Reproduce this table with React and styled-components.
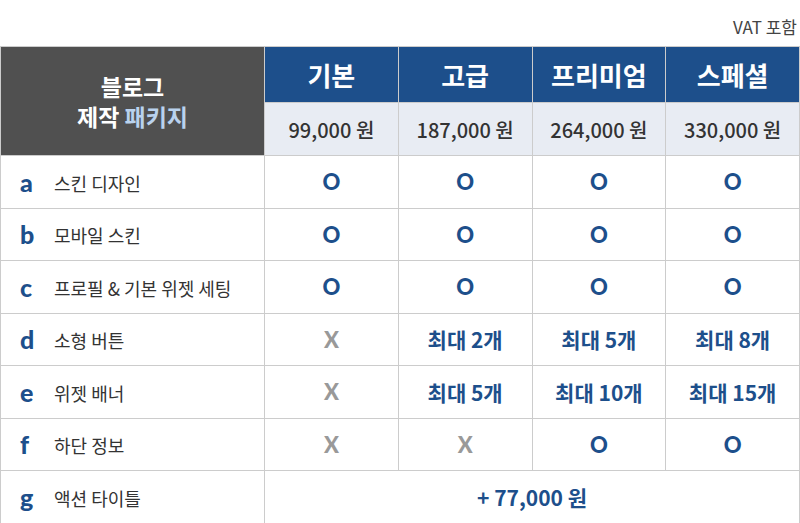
import * as React from "react";
import styled, { createGlobalStyle } from "styled-components";

const COLOR = {
  blue: "#1d4f8b",
  dark: "#505050",
  line: "#cccccc",
  price: "#e8ecf3",
  text: "#333333",
  gray: "#999999",
  accent: "#b9d2ee",
};

const PLANS = ["기본", "고급", "프리미엄", "스페셜"];
const PRICES = ["99,000 원", "187,000 원", "264,000 원", "330,000 원"];

const ROWS = [
  { key: "a", label: "스킨 디자인", cells: ["O", "O", "O", "O"] },
  { key: "b", label: "모바일 스킨", cells: ["O", "O", "O", "O"] },
  { key: "c", label: "프로필 & 기본 위젯 세팅", cells: ["O", "O", "O", "O"] },
  { key: "d", label: "소형 버튼", cells: ["X", "최대 2개", "최대 5개", "최대 8개"] },
  { key: "e", label: "위젯 배너", cells: ["X", "최대 5개", "최대 10개", "최대 15개"] },
  { key: "f", label: "하단 정보", cells: ["X", "X", "O", "O"] },
];

const GlobalStyle = createGlobalStyle`
  html, body {
    margin: 0;
    padding: 0;
    background: #fff;
  }
  body {
    font-family: "Noto Sans CJK KR", "Noto Sans", sans-serif;
  }
`;

const App = () => {
  return (
    <Page>
      <GlobalStyle />
      <Note>VAT 포함</Note>
      <Table>
        <colgroup>
          <col style={{ width: 264 }} />
          <col />
          <col />
          <col />
          <col />
        </colgroup>
        <thead>
          <tr>
            <Title rowSpan={2}>
              블로그
              <br />
              제작 <Accent>패키지</Accent>
            </Title>
            {PLANS.map((p) => (
              <Plan key={p}>{p}</Plan>
            ))}
          </tr>
          <tr>
            {PRICES.map((p) => (
              <Price key={p}>{p}</Price>
            ))}
          </tr>
        </thead>
        <tbody>
          {ROWS.map((row) => (
            <Row key={row.key}>
              <Label>
                <Letter>{row.key}</Letter>
                {row.label}
              </Label>
              {row.cells.map((c, i) => (
                <Cell key={i} $mark={c === "O" || c === "X"} $off={c === "X"}>
                  {c}
                </Cell>
              ))}
            </Row>
          ))}
          <Row>
            <Label>
              <Letter>g</Letter>
              액션 타이틀
            </Label>
            <Cell colSpan={4}>+ 77,000 원</Cell>
          </Row>
        </tbody>
      </Table>
    </Page>
  );
};

const Page = styled.div`
  width: 800px;
  display: flex;
  flex-direction: column;
`;

const Note = styled.div`
  height: 46px;
  display: flex;
  align-items: center;
  justify-content: flex-end;
  padding: 6px 3px 0 0;
  box-sizing: border-box;
  font-size: 17px;
  color: #444;
`;

const Table = styled.table`
  width: 800px;
  border-collapse: collapse;
  table-layout: fixed;

  td,
  th {
    border: 1px solid ${COLOR.line};
    padding: 0;
    text-align: center;
  }
`;

const Title = styled.th`
  background: ${COLOR.dark};
  color: #fff;
  font-size: 23px;
  font-weight: 700;
  line-height: 30px;
`;

const Accent = styled.span`
  color: ${COLOR.accent};
`;

const Plan = styled.th`
  height: 55px;
  background: ${COLOR.blue};
  color: #fff;
  font-size: 26px;
  font-weight: 700;
`;

const Price = styled.td`
  height: 52px;
  background: ${COLOR.price};
  color: ${COLOR.text};
  font-size: 20px;
  font-weight: 500;
`;

const Row = styled.tr`
  height: 52.5px;
`;

const Label = styled.td`
  text-align: left !important;
  font-size: 18px;
  color: ${COLOR.text};
`;

const Letter = styled.span`
  display: inline-block;
  width: 53px;
  padding-left: 19px;
  box-sizing: border-box;
  font-family: "Lato", "Noto Sans", sans-serif;
  font-weight: 900;
  font-size: 25px;
  color: ${COLOR.blue};
  vertical-align: -1px;
`;

const Cell = styled.td`
  font-size: 21px;
  font-weight: 700;
  font-family: ${(p) =>
    p.$mark ? `"Lato", "Noto Sans", sans-serif` : `"Noto Sans CJK KR", sans-serif`};
  font-weight: ${(p) => (p.$mark ? 900 : 700)};
  font-size: ${(p) => (p.$mark ? "22px" : "21px")};
  color: ${(p) => (p.$off ? COLOR.gray : COLOR.blue)};
`;

export default App;
